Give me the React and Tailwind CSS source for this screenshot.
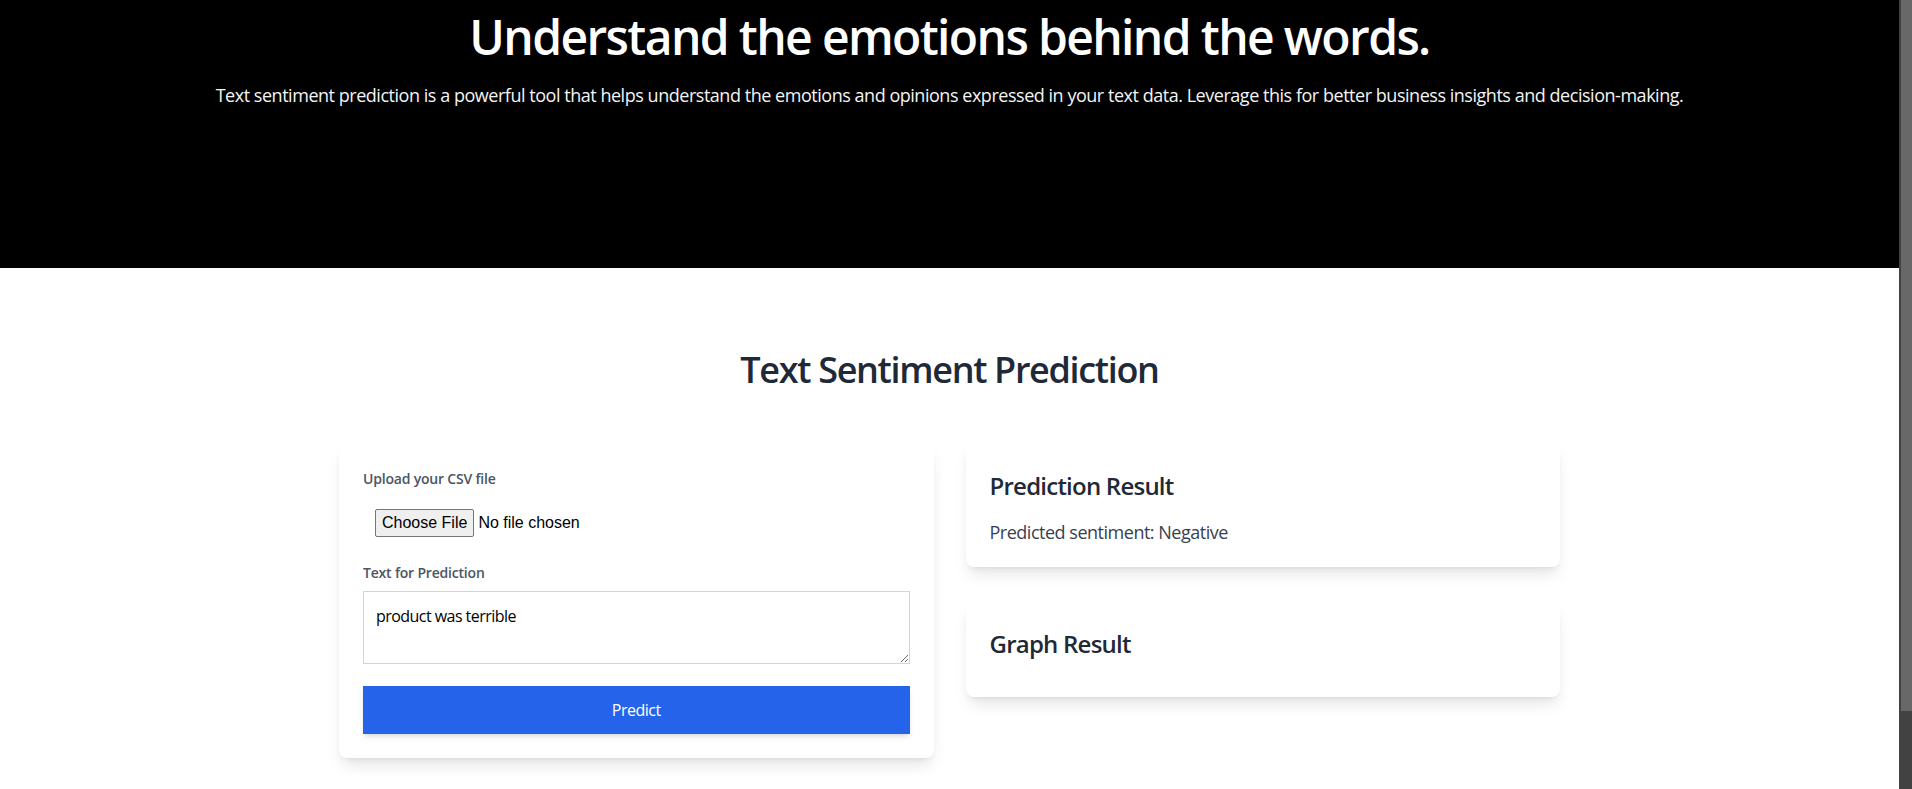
export default function App() {
  return (
    <div className="flex h-screen overflow-hidden bg-white font-['Open_Sans',sans-serif] tracking-[-0.03em]">
      <div className="min-w-0 flex-1">
        {/* Hero */}
        <header className="h-[268px] bg-black pt-[13px] text-center">
          <h1 className="text-5xl font-semibold tracking-[-0.034em] text-white">Understand the emotions behind the words.</h1>
          <p className="mt-5 text-lg tracking-[-0.026em] text-[#f3f4f6]">
            Text sentiment prediction is a powerful tool that helps understand the emotions and opinions expressed in your text data. Leverage this for better business insights and decision-making.
          </p>
        </header>

        {/* Prediction section */}
        <section className="pt-[82px] pb-28">
          <h2 className="mb-[53px] text-center text-4xl font-semibold tracking-[-0.037em] text-[#1f2937]">Text Sentiment Prediction</h2>

          <div className="mx-auto grid max-w-[1221px] grid-cols-2 items-start gap-8">
            <div className="rounded-lg bg-white px-6 pt-[26px] pb-6 shadow-lg">
              <label className="mb-2 block text-sm font-semibold tracking-[-0.014em] text-[#4b5563]">Upload your CSV file</label>
              <input
                type="file"
                className="mb-[14px] block w-full p-3 font-['Liberation_Sans',Arial,sans-serif] text-base tracking-normal text-black file:mr-1 file:rounded-[2px] file:border file:border-[#767676] file:bg-[#efefef] file:px-[6px] file:py-[1px] file:text-black"
              />
              <label className="mb-2 block text-sm font-semibold tracking-[-0.014em] text-[#4b5563]">Text for Prediction</label>
              <textarea
                defaultValue="product was terrible"
                className="mb-[22px] block h-[73px] w-full border border-[#d1d5db] p-3 text-base tracking-[-0.034em] text-black"
              />
              <button className="w-full bg-[#2563eb] py-3 text-base text-white shadow-md">Predict</button>
            </div>

            <div className="flex flex-col gap-[34px]">
              <div className="rounded-lg bg-white px-6 pt-[27px] pb-[21px] shadow-lg">
                <h3 className="mb-4 text-2xl font-semibold tracking-[-0.032em] text-[#1f2937]">Prediction Result</h3>
                <p className="text-lg tracking-[-0.027em] text-[#374151]">Predicted sentiment: Negative</p>
              </div>
              <div className="rounded-lg bg-white px-6 pt-[27px] pb-[21px] shadow-lg">
                <h3 className="mb-4 text-2xl font-semibold tracking-[-0.032em] text-[#1f2937]">Graph Result</h3>
                <div />
              </div>
            </div>
          </div>
        </section>
      </div>

      {/* scrollbar */}
      <div className="w-[13px] shrink-0 bg-[#424242] pl-[2px]">
        <div className="h-[711px] bg-[#686868]" />
      </div>
    </div>
  );
}
